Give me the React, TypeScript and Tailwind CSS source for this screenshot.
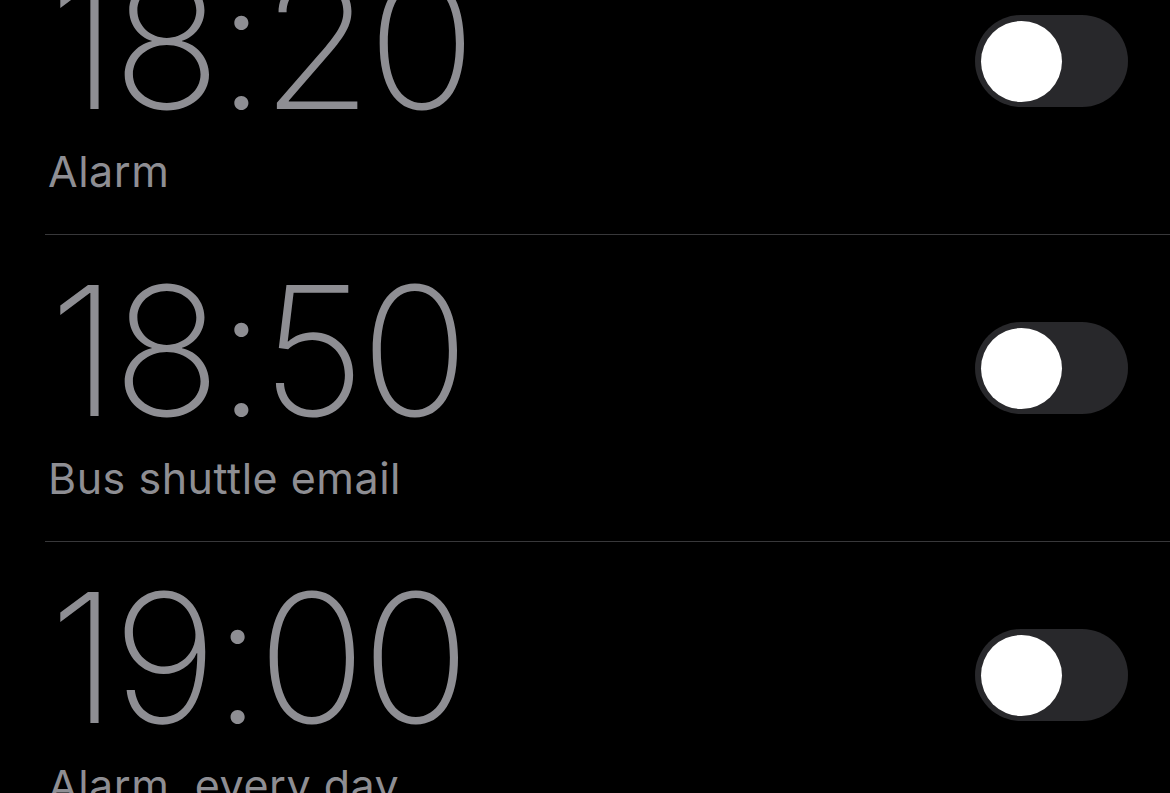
import React from "react";

type Alarm = { time: string; label: string; on: boolean };

const alarms: Alarm[] = [
  { time: "18:20", label: "Alarm", on: false },
  { time: "18:50", label: "Bus shuttle email", on: false },
  { time: "19:00", label: "Alarm, every day", on: false },
];

function Toggle({ on }: { on: boolean }) {
  return (
    <div
      className={
        "flex h-[92px] w-[153px] shrink-0 items-center rounded-full px-[6px] " +
        (on ? "justify-end bg-[#30d158]" : "justify-start bg-[#28282b]")
      }
    >
      <div className="h-[81px] w-[81px] rounded-full bg-white" />
    </div>
  );
}

function AlarmRow({ alarm }: { alarm: Alarm }) {
  return (
    <div className="ml-[45px] flex border-t border-[#38383a] pr-[42px]">
      <div className="flex-1 pt-[26px] pb-[42px]">
        <div className="ml-[4px] h-[180px] whitespace-nowrap text-[180px] leading-[180px] font-extralight tracking-[-0.027em] text-[#8e8e93]">
          {alarm.time}
        </div>
        <div className="ml-[3px] mt-[16px] h-[42px] whitespace-nowrap text-[43px] leading-[42px] font-normal tracking-[0.012em] text-[#8e8e93]">
          {alarm.label}
        </div>
      </div>
      <div className="pt-[87px]">
        <Toggle on={alarm.on} />
      </div>
    </div>
  );
}

export default function App() {
  return (
    <div
      className="h-[793px] w-full overflow-hidden bg-black"
      style={{ fontFamily: "Inter, 'Noto Sans', sans-serif" }}
    >
      <div className="mt-[-73px]">
        {alarms.map((a) => (
          <AlarmRow key={a.time} alarm={a} />
        ))}
      </div>
    </div>
  );
}
